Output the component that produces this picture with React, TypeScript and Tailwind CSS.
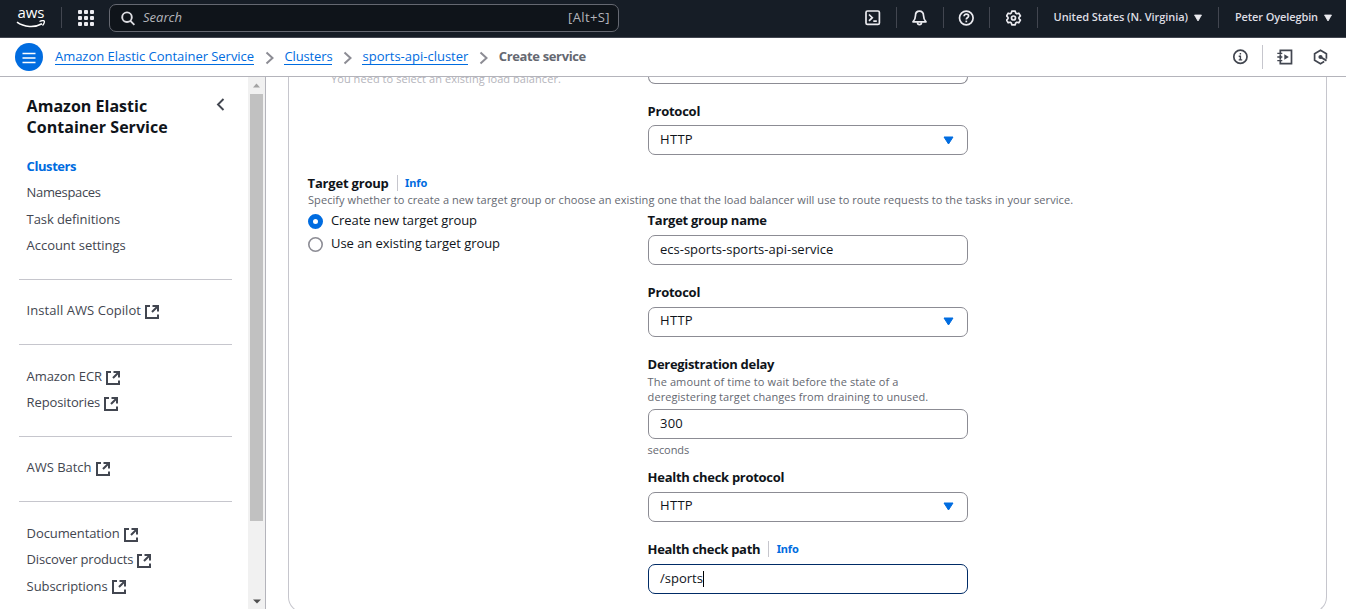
import type { ReactNode } from "react";

function ExternalIcon() {
  return (
    <svg className="ml-[4px] mt-[3px] h-[14px] w-[14px] shrink-0" viewBox="0 0 14 14" fill="none" stroke="#424650" strokeWidth="2">
      <path d="M5 1H1v12h12V9.500" />
      <path d="M7.500 1H13v5.500M12.800 1.200L7 7" />
    </svg>
  );
}

function SideLink({ label, className, external }: { label: string; className: string; external?: boolean }) {
  return (
    <a className="flex h-[18px] items-center">
      <span className={className}>{label}</span>
      {external && <ExternalIcon />}
    </a>
  );
}

function Divider() {
  return <div className="-ml-[7.600px] h-px w-[213px] bg-[#c6c6cd]" />;
}

function Chevron() {
  return (
    <svg className="mt-px h-[14px] w-[10px]" viewBox="0 0 10 14" fill="none" stroke="#8c8c94" strokeWidth="2">
      <path d="M1.500 1.500L7.500 7l-6 5.500" />
    </svg>
  );
}

function Label({ children, className = "" }: { children: ReactNode; className?: string }) {
  return <div className={"-ml-[0.400px] h-[18px] text-[13px] leading-[18px] font-bold " + className}>{children}</div>;
}

function Box({ children, select, focused, className = "pb-px" }: { children: ReactNode; select?: boolean; focused?: boolean; className?: string }) {
  return (
    <div className={"flex h-[30px] w-[320px] items-center justify-between rounded-[7px] border pr-[13px] pl-[11px] text-[13px] " + (focused ? "border-[#002b66] " : "border-[#8c8c94] ") + className}>
      <span className="flex items-center">{children}</span>
      {select && (
        <svg className="mt-px h-[9px] w-[11px]" viewBox="0 0 11 9">
          <path d="M1 1h9L5.500 8z" fill="#006ce0" stroke="#006ce0" strokeLinejoin="round" />
        </svg>
      )}
    </div>
  );
}

function Info() {
  return (
    <span className="ml-2 border-l border-[#c6c6cd] pl-[7.500px] font-['Noto_Sans',sans-serif] text-[11px] leading-4 tracking-[-0.12px] text-[#006ce0]">Info</span>
  );
}

function NavSep() {
  return <div className="h-[21px] w-px bg-[#424650]" />;
}

function Caret() {
  return (
    <svg className="h-[8px] w-[8px]" viewBox="0 0 8 8">
      <path d="M0.500 1h7L4 7z" fill="#ebebf0" stroke="#ebebf0" strokeWidth="0.800" strokeLinejoin="round" />
    </svg>
  );
}

function TopNav() {
  return (
    <header className="flex h-[38px] shrink-0 items-center border-b border-[#424650] bg-[#161d26] pb-[2px] text-[#dedee3]">
      <div className="ml-[15px] flex h-[24px] w-[32px] flex-col items-center">
        <span className="text-[15px] leading-[13px] font-medium tracking-[-0.1px] text-white">aws</span>
        <svg className="mt-px h-[8px] w-[30px]" viewBox="0 0 30 8" fill="none" stroke="#fff" strokeWidth="1.600">
          <path d="M1 2.200c7 5.200 18 5.600 25 1.600" />
          <path d="M23.500 1.500c2-.9 4.400-.9 4.800-.4s-.3 2.900-1.800 4.400" strokeWidth="1.300" />
        </svg>
      </div>
      <div className="ml-[14px]"><NavSep /></div>
      <div className="ml-[16px] grid grid-cols-3 gap-[2px]">
        {Array.from({ length: 9 }, (_, i) => (
          <span key={i} className="h-[4px] w-[4px] rounded-[1px] bg-[#ebebf0]" />
        ))}
      </div>
      <div className="ml-[15px] flex h-[28px] w-[510px] items-center rounded-[7px] border border-[#656871] bg-[#0f141a] pr-[8px] pl-[11px] text-[13px]">
        <svg className="mt-px h-[15px] w-[14px]" viewBox="0 0 14 15" fill="none" stroke="#dedee3" strokeWidth="1.900">
          <circle cx="6" cy="6.200" r="4.800" />
          <path d="M9.400 9.900l4 4" />
        </svg>
        <span className="ml-2 flex-1 text-[#b4b4bb] italic">Search</span>
        <span className="tracking-[0.4px] text-[#b4b4bb]">[Alt+S]</span>
      </div>
      <div className="flex-1" />
      <svg className="h-[16px] w-[16px]" viewBox="0 0 16 16" fill="none" stroke="#ebebf0" strokeWidth="1.700">
        <rect x="1" y="1" width="13.400" height="13.400" rx="1.500" />
        <path d="M4 4.500l3.300 3.200L4 10.900M8.300 11.100h3.500" />
      </svg>
      <div className="ml-[15px]"><NavSep /></div>
      <svg className="ml-[15px] h-[16px] w-[16px]" viewBox="0.500 0 16 16" fill="none" stroke="#ebebf0" strokeWidth="1.700" strokeLinejoin="round">
        <path d="M8 1.200c-2.500 0-4 1.800-4 4.200 0 3-.8 4.400-2.500 6.400h13C12.800 9.800 12 8.400 12 5.400c0-2.400-1.500-4.200-4-4.200z" />
        <path d="M6 12.200c0 3.300 4 3.300 4 0" />
      </svg>
      <div className="ml-[15px]"><NavSep /></div>
      <svg className="ml-[14px] h-[16px] w-[16px]" viewBox="0 0 16 16" fill="none" stroke="#ebebf0" strokeWidth="1.700">
        <circle cx="8.300" cy="8" r="6.800" />
        <path d="M6.100 6.300c0-3 4.500-2.700 4.500-.2 0 1.700-2.300 1.700-2.300 3.300" />
        <path d="M8.300 10.600v1.700" />
      </svg>
      <div className="ml-[15px]"><NavSep /></div>
      <svg className="ml-[16px] h-[16px] w-[16px]" viewBox="0.500 0 16 16" fill="none" stroke="#ebebf0" strokeWidth="1.700" strokeLinejoin="round">
        <path d="M6.300 1.200h3.400l.5 1.900 1.200.7 1.900-.6 1.600 2.800L13.500 7.300v1.400l1.400 1.300-1.600 2.800-1.900-.6-1.200.7-.5 1.900H6.300l-.5-1.900-1.200-.7-1.900.6L1.100 10l1.400-1.300V7.300L1.100 6l1.600-2.800 1.900.6 1.200-.7z" />
        <circle cx="8" cy="8" r="2" />
      </svg>
      <div className="ml-[15px]"><NavSep /></div>
      <span className="ml-[16px] text-[11px] font-semibold tracking-[-0.06px] whitespace-nowrap">United States (N. Virginia)</span>
      <div className="ml-[6px]"><Caret /></div>
      <div className="ml-[16px]"><NavSep /></div>
      <span className="ml-[16px] text-[11px] font-semibold tracking-[-0.11px] whitespace-nowrap">Peter Oyelegbin</span>
      <div className="mr-[14px] ml-[6px]"><Caret /></div>
    </header>
  );
}

function BreadcrumbBar() {
  const link = "border-b border-[#006ce0] leading-[15px] whitespace-nowrap text-[#006ce0] ";
  return (
    <div className="flex h-[39px] shrink-0 items-center border-b border-[#b4b4bb] bg-white text-[13px]">
      <div className="ml-[15px] flex h-7 w-7 items-center justify-center rounded-full bg-[#006ce0]">
        <svg className="mt-[2px] h-[12px] w-[14px]" viewBox="0 0 14 12" stroke="#fff" strokeWidth="1.600">
          <path d="M0.500 1.500h13M0.500 6h13M0.500 10.500h13" />
        </svg>
      </div>
      <a className={link + "ml-[12px] tracking-[-0.04px]"}>Amazon Elastic Container Service</a>
      <div className="ml-[11px]"><Chevron /></div>
      <a className={link + "ml-[9.400px] tracking-[-0.13px]"}>Clusters</a>
      <div className="ml-[11px]"><Chevron /></div>
      <a className={link + "ml-[9px]"}>sports-api-cluster</a>
      <div className="ml-[11px]"><Chevron /></div>
      <span className="-mt-[2px] ml-[9.500px] leading-[15px] font-bold tracking-[-0.37px] text-[#656871]">Create service</span>
      <div className="flex-1" />
      <svg className="h-[16px] w-[16px]" viewBox="0 0 16 16" fill="none" stroke="#424650" strokeWidth="1.700">
        <circle cx="8.400" cy="7.700" r="6.600" />
        <path d="M8.400 3.900v1.700M6.700 7.200h1.700v3.600M6.700 10.900h3.500" strokeWidth="1.400" />
      </svg>
      <div className="ml-[14px] h-6 w-px bg-[#c6c6cd]" />
      <svg className="ml-[14px] h-[16px] w-[16px]" viewBox="0 0 16 16" fill="none" stroke="#424650" strokeWidth="1.700">
        <path d="M3.300 4V1.300h11.200v13.400H3.300V12M3.300 5.200v5.600" />
        <path d="M0.300 4.400h5M0.300 8h5M0.300 11.600h5" strokeWidth="1.400" />
        <path d="M7.300 5.200v5.600L11.800 8z" fill="#424650" stroke="none" />
      </svg>
      <svg className="mr-[17px] ml-[20px] h-[16px] w-[16px]" viewBox="0.500 0 16 16" fill="none" stroke="#424650" strokeWidth="1.700">
        <path d="M13.900 9.800V4.700L8 1.300 2.100 4.700v6.600L8 14.700l3.700-2.100" />
        <circle cx="8" cy="8" r="2.100" fill="#424650" stroke="none" />
        <path d="M8 8l6 3.600" strokeWidth="1.900" />
      </svg>
    </div>
  );
}

function Sidebar() {
  return (
    <aside className="flex w-[266px] shrink-0 border-r border-[#b4b4bb]">
      <nav className="w-[248px] pl-[26.600px] text-[13px] leading-[18px] whitespace-nowrap text-[#424650]">
        <div className="flex pt-[19px]">
          <h2 className="w-[189px] text-[16px] leading-[21px] font-bold tracking-[0.02px] text-[#0f141a]">
            Amazon Elastic<br />Container Service
          </h2>
          <svg className="mt-[2px] h-[13px] w-[9px]" viewBox="0 0 9 13" fill="none" stroke="#424650" strokeWidth="1.900">
            <path d="M7.500 1L2 6.500 7.500 12" />
          </svg>
        </div>
        <div className="mt-[19px] flex flex-col gap-[8.400px]">
          <SideLink label="Clusters" className="font-bold tracking-[-0.43px] text-[#006ce0]" />
          <SideLink label="Namespaces" className="tracking-[-0.34px]" />
          <SideLink label="Task definitions" className="tracking-[-0.08px]" />
          <SideLink label="Account settings" className="tracking-[-0.04px]" />
        </div>
        <div className="mt-[25px]"><Divider /></div>
        <div className="mt-[21px]"><SideLink external label="Install AWS Copilot" className="tracking-[0.060px]" /></div>
        <div className="mt-[25px]"><Divider /></div>
        <div className="mt-[22px] flex flex-col gap-[8px]">
          <SideLink external label="Amazon ECR" className="tracking-[-0.08px]" />
          <SideLink external label="Repositories" className="tracking-[-0.13px]" />
        </div>
        <div className="mt-[25px]"><Divider /></div>
        <div className="mt-[21px]"><SideLink external label="AWS Batch" className="tracking-[-0.03px]" /></div>
        <div className="mt-[25px]"><Divider /></div>
        <div className="mt-[22px] flex flex-col gap-[8.300px]">
          <SideLink external label="Documentation" className="tracking-[-0.1px]" />
          <SideLink external label="Discover products" className="tracking-[-0.17px]" />
          <SideLink external label="Subscriptions" className="tracking-[-0.07px]" />
        </div>
      </nav>
      <div className="flex w-[17px] flex-col items-center bg-[#f1f1f1]">
        <svg className="mt-[6px] h-[5px] w-[7px] shrink-0" viewBox="0 0 7 5"><path d="M0 4.500L3.500 0.500 7 4.500z" fill="#a3a3a3" /></svg>
        <div className="mt-[6px] h-[427px] w-[13px] shrink-0 bg-[#c1c1c1]" />
        <div className="flex-1" />
        <svg className="mb-[5px] h-[5px] w-[8px] shrink-0" viewBox="0 0 8 5"><path d="M0 0.500h8L4 4.500z" fill="#505050" /></svg>
      </div>
    </aside>
  );
}

function Content() {
  const hint = "text-[11px] leading-[15px] text-[#656871] whitespace-nowrap ";
  return (
    <main className="h-[532px] flex-1 overflow-hidden pl-[22px]">
      <div className="h-[536px] w-[1039px] rounded-b-[16px] border-x border-b border-[#c6c6cd] pl-[19px] text-[#0f141a]">
        <div className="flex h-[7px]">
          <div className="w-[340px] pl-[23px]">
            <div className="-mt-[6px] text-[11px] leading-[15px] tracking-[0.060px] whitespace-nowrap text-[#b4b4bb]">You need to select an existing load balancer.</div>
          </div>
          <div className="h-[7px] w-[320px] rounded-b-[7px] border-x border-b border-[#8c8c94]" />
        </div>
        <div className="pt-[18px] pl-[340px]">
          <Label className="tracking-[-0.25px]">Protocol</Label>
          <Box select className="mt-[5px] pb-px"><span className="tracking-[0.320px]">HTTP</span></Box>
        </div>
        <Label className="mt-[19px] flex items-center tracking-[-0.2px]">Target group<Info /></Label>
        <div className={hint + "tracking-[0.070px]"}>
          Specify whether to create a new target group or choose an existing one that the load balancer will use to route requests to the tasks in your service.
        </div>
        <div className="mt-[4px] flex text-[13px]">
          <div className="w-[340px] pt-px">
            <label className="flex h-[18px] items-center gap-2 tracking-[-0.075px]">
              <span className="h-[15px] w-[15px] rounded-full border-[5px] border-[#006ce0] bg-white" />Create new target group
            </label>
            <label className="mt-[5px] flex h-[18px] items-center gap-2 tracking-[-0.053px]">
              <svg className="h-[15px] w-[15px]" viewBox="0 0 15 15"><circle cx="7.500" cy="7.500" r="6.700" fill="#fff" stroke="#8c8c94" strokeWidth="1.600" /></svg>
              Use an existing target group
            </label>
          </div>
          <div className="w-[320px]">
            <Label className="tracking-[-0.27px]">Target group name</Label>
            <Box className="mt-[6px] pb-px">ecs-sports-sports-api-service</Box>
            <Label className="mt-[18px] tracking-[-0.25px]">Protocol</Label>
            <Box select className="mt-[6px] pb-[3px]"><span className="tracking-[0.320px]">HTTP</span></Box>
            <Label className="mt-[18px] tracking-[-0.31px]">Deregistration delay</Label>
            <div className={hint + "-ml-[0.400px] mt-px tracking-[0.110px]"}>The amount of time to wait before the state of a</div>
            <div className={hint + "-ml-[0.400px] tracking-[0.070px]"}>deregistering target changes from draining to unused.</div>
            <Box className="mt-[5px] pb-px"><span className="tracking-[0.230px]">300</span></Box>
            <div className={hint + "-ml-[0.400px] mt-[3px] tracking-[-0.070px]"}>seconds</div>
            <Label className="mt-[11px] tracking-[-0.29px]">Health check protocol</Label>
            <Box select className="mt-[6px] pb-[3px]"><span className="tracking-[0.320px]">HTTP</span></Box>
            <Label className="mt-[18px] flex items-center tracking-[-0.34px]">Health check path<Info /></Label>
            <Box focused className="mt-[6px] pb-px">/sports<span className="h-[16px] w-px bg-black" /></Box>
          </div>
        </div>
      </div>
    </main>
  );
}

export default function App() {
  return (
    <div className="flex h-[609px] w-[1346px] flex-col overflow-hidden bg-white font-['Open_Sans','Noto_Sans',sans-serif]">
      <TopNav />
      <BreadcrumbBar />
      <div className="flex h-[532px]">
        <Sidebar />
        <Content />
      </div>
    </div>
  );
}
